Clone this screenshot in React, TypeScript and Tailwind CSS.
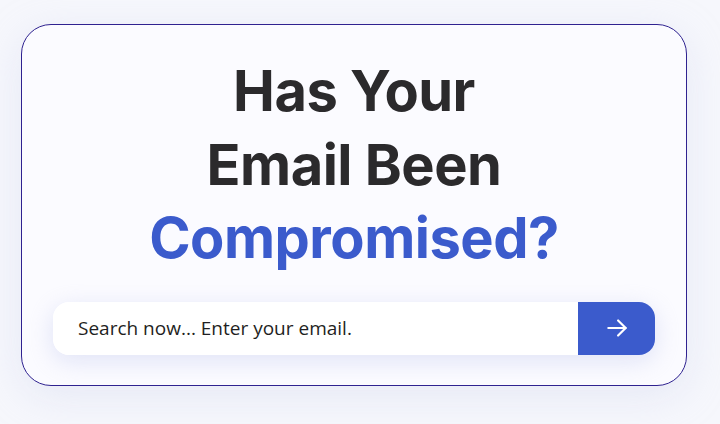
import React from "react";

const ArrowIcon = () => (
  <svg width="26" height="26" viewBox="0 0 24 24" fill="none" stroke="white" strokeWidth="2" strokeLinecap="round" strokeLinejoin="round">
    <path d="M4 12h16" />
    <path d="M13 5l7 7-7 7" />
  </svg>
);

const App: React.FC = () => {
  return (
    <div className="w-[720px] h-[424px] bg-[#f6f7fc] pt-[24px] pl-[21px] overflow-hidden">
      <div className="w-[666px] h-[362px] rounded-[30px] border-[1.5px] border-[#2f2290] bg-[#fbfbff] shadow-[0_10px_40px_rgba(200,205,235,0.35)] px-[31px] pt-[30px] flex flex-col">
        <h1
          className="text-center font-bold text-[56px] leading-[73.5px] tracking-[-0.5px] text-[#2b2a2c]"
          style={{ fontFamily: "Inter, 'Liberation Sans', sans-serif" }}
        >
          Has Your
          <br />
          Email Been
          <br />
          <span className="text-[#3b5bcc]">Compromised?</span>
        </h1>
        <div className="mt-[26px] flex h-[53px] rounded-[16px] shadow-[0_6px_24px_rgba(190,198,235,0.45)]">
          <input
            type="email"
            placeholder="Search now... Enter your email."
            className="flex-1 min-w-0 h-full bg-white rounded-l-[16px] pl-[25px] text-[19px] text-[#1f1f22] placeholder-[#1f1f22] outline-none"
            style={{ fontFamily: "'Open Sans', 'Liberation Sans', sans-serif" }}
          />
          <button className="w-[77px] h-full bg-[#3b5bcc] rounded-r-[16px] flex items-center justify-center">
            <ArrowIcon />
          </button>
        </div>
      </div>
    </div>
  );
};

export default App;
